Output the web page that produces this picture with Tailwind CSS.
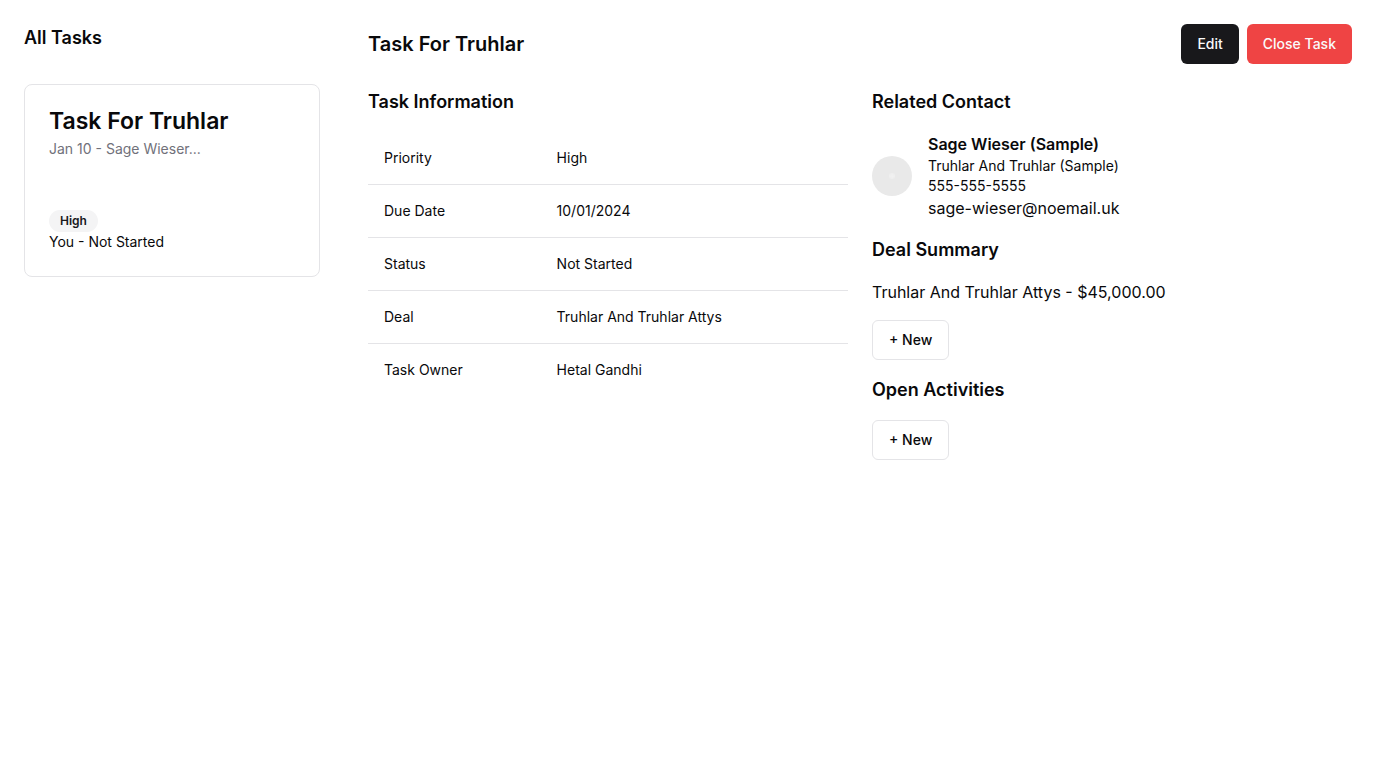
<!DOCTYPE html>
<html lang="en">
<head>
<meta charset="utf-8">
<meta name="viewport" content="width=device-width, initial-scale=1">
<title>Task For Truhlar</title>
<script src="https://cdn.jsdelivr.net/npm/@tailwindcss/browser@4"></script>
</head>
<body class="bg-white font-['Inter',sans-serif] text-base text-[#09090b]">
<div class="flex min-h-screen">
  <aside class="w-1/4 p-6">
    <h2 class="mb-8 text-lg font-semibold">All Tasks</h2>
    <article class="rounded-lg border border-[#e4e4e7] p-6">
      <h3 class="text-[23px] leading-6 font-semibold">Task For Truhlar</h3>
      <p class="mt-1.5 text-sm text-[#71717a]">Jan 10 - Sage Wieser...</p>
      <div class="mt-[51px] flex">
        <span class="rounded-full border border-transparent bg-[#f4f4f5] px-2.5 py-0.5 text-xs font-semibold text-[#18181b]">High</span>
      </div>
      <p class="text-sm">You - Not Started</p>
    </article>
  </aside>
  <main class="flex-1 p-6">
    <header class="mb-6 flex items-center justify-between">
      <h1 class="text-xl font-semibold">Task For Truhlar</h1>
      <div class="flex gap-2">
        <button type="button" class="h-10 rounded-md bg-[#18181b] px-4 text-sm font-medium text-[#fafafa]">Edit</button>
        <button type="button" class="h-10 rounded-md bg-[#ef4444] px-4 text-sm font-medium text-[#fafafa]">Close Task</button>
      </div>
    </header>
    <div class="grid grid-cols-2 gap-6">
      <section class="space-y-4">
        <h2 class="text-lg font-semibold">Task Information</h2>
        <table class="w-full text-left text-sm">
          <tbody class="divide-y divide-[#e4e4e7]">
            <tr><th scope="row" class="p-4 font-normal">Priority</th><td class="p-4">High</td></tr>
            <tr><th scope="row" class="p-4 font-normal">Due Date</th><td class="p-4">10/01/2024</td></tr>
            <tr><th scope="row" class="p-4 font-normal">Status</th><td class="p-4">Not Started</td></tr>
            <tr><th scope="row" class="p-4 font-normal">Deal</th><td class="p-4">Truhlar And Truhlar Attys</td></tr>
            <tr><th scope="row" class="p-4 font-normal">Task Owner</th><td class="p-4">Hetal Gandhi</td></tr>
          </tbody>
        </table>
      </section>
      <section class="space-y-4">
        <h2 class="text-lg font-semibold">Related Contact</h2>
        <div class="flex items-center gap-4">
          <svg class="size-10 shrink-0" viewBox="0 0 40 40" aria-hidden="true">
            <circle cx="20" cy="20" r="20" fill="#e9e9e9"/>
            <circle cx="20" cy="20" r="3" fill="#eeeeee"/>
            <path d="M20 17.5v5M17.5 20h5" stroke="#f1f1f1" stroke-width="1"/>
          </svg>
          <div>
            <p class="font-semibold">Sage Wieser (Sample)</p>
            <p class="text-sm">Truhlar And Truhlar (Sample)</p>
            <p class="text-sm">555-555-5555</p>
            <p>sage-wieser@noemail.uk</p>
          </div>
        </div>
        <h2 class="text-lg font-semibold">Deal Summary</h2>
        <p>Truhlar And Truhlar Attys - $45,000.00</p>
        <button type="button" class="block h-10 rounded-md border border-[#e4e4e7] px-4 text-sm font-medium">+ New</button>
        <h2 class="text-lg font-semibold">Open Activities</h2>
        <button type="button" class="block h-10 rounded-md border border-[#e4e4e7] px-4 text-sm font-medium">+ New</button>
      </section>
    </div>
  </main>
</div>
</body>
</html>
